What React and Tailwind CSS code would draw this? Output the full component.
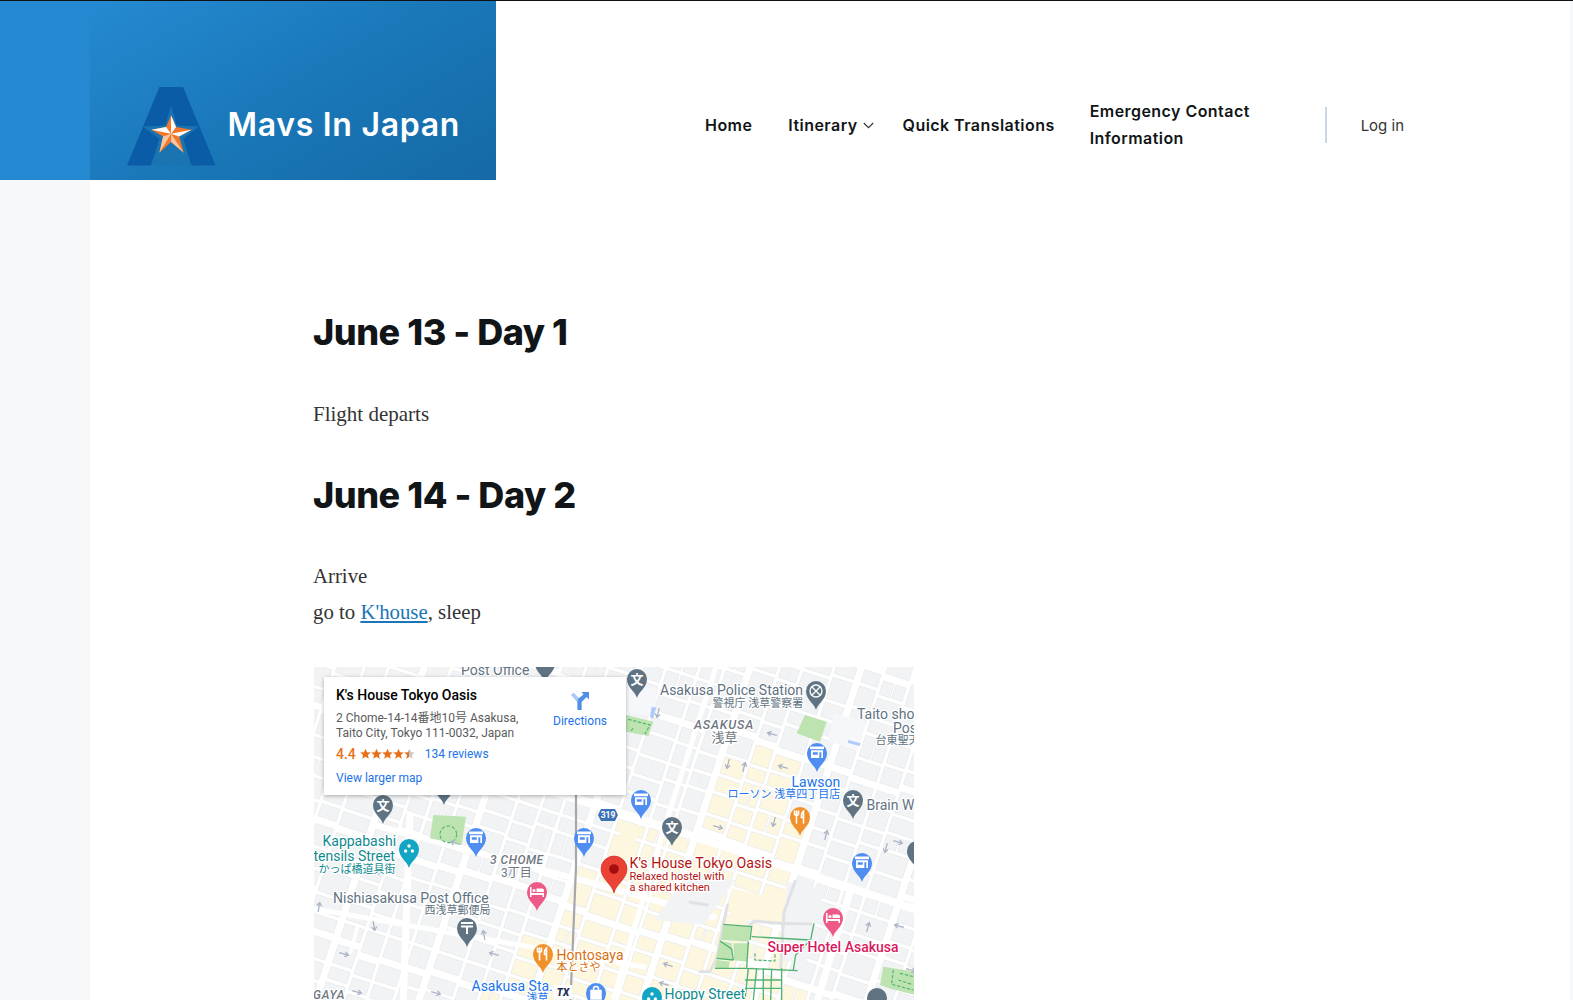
import React from "react";

const GREY = "#5f7382";
const halo = { paintOrder: "stroke", stroke: "#ffffff", strokeWidth: 2.5, strokeLinejoin: "round" };

function rnd(i, j) {
  const s = Math.sin(i * 12.9898 + j * 78.233) * 43758.5453;
  return s - Math.floor(s);
}

function inPoly(x, y, poly) {
  let inside = false;
  for (let i = 0, j = poly.length - 1; i < poly.length; j = i++) {
    const [xi, yi] = poly[i];
    const [xj, yj] = poly[j];
    if (yi > y !== yj > y && x < ((xj - xi) * (y - yi)) / (yj - yi) + xi) inside = !inside;
  }
  return inside;
}

const CREAM = [[413, 80], [473, 90], [480, 165], [470, 260], [500, 340], [165, 340], [205, 300], [235, 240], [285, 190], [300, 150], [400, 160]];
const ANGLE = (18 * Math.PI) / 180;

function buildBlocks() {
  const out = [];
  const widths = [22, 18, 26, 20, 17, 24, 19, 28, 20, 18];
  const heights = [14, 19, 12, 22, 15, 13, 20, 17];
  let u = -160;
  let c = 0;
  while (u < 780) {
    const w = widths[c % widths.length];
    let v = -170;
    let r = 0;
    const gapU = c % 4 === 3 ? 8 : 4;
    while (v < 640) {
      const h = heights[(r + c * 3) % heights.length];
      const gapV = r % 5 === 4 ? 8 : 4;
      const split = rnd(c, r) > 0.8;
      const cu = u + w / 2 - 300;
      const cv = v + h / 2 - 225;
      const mx = 300 + cu * Math.cos(ANGLE) - cv * Math.sin(ANGLE);
      const my = 225 + cu * Math.sin(ANGLE) + cv * Math.cos(ANGLE);
      const fill = inPoly(mx, my, CREAM) ? "#fef7e0" : "#f1f3f4";
      if (split) {
        out.push(<rect key={`${c}-${r}a`} x={u} y={v} width={w * 0.46} height={h} fill={fill} stroke="#e4e6e9" strokeWidth="0.6" />);
        out.push(<rect key={`${c}-${r}b`} x={u + w * 0.54} y={v} width={w * 0.46} height={h} fill={fill} stroke="#e4e6e9" strokeWidth="0.6" />);
      } else {
        out.push(<rect key={`${c}-${r}`} x={u} y={v} width={w} height={h} fill={fill} stroke="#e4e6e9" strokeWidth="0.6" />);
      }
      v += h + gapV;
      r += 1;
    }
    u += w + gapU;
    c += 1;
  }
  return out;
}

const PIN = "M0 0 C-2 -7 -10 -10 -10 -19 A10 10 0 1 1 10 -19 C10 -10 2 -7 0 0Z";

function Pin({ x, y, color, children }) {
  return (
    <g transform={`translate(${x} ${y})`}>
      <path d={PIN} fill={color} />
      <g transform="translate(0 -19)">{children}</g>
    </g>
  );
}

const Bun = () => (
  <text y="4.5" textAnchor="middle" fontSize="13" fontWeight="700" fill="#fff" fontFamily="'Noto Sans CJK JP', sans-serif">文</text>
);
const Shop = () => (
  <g fill="#fff">
    <path d="M-7 -6.5H7V-3.8H-7Z" />
    <path fillRule="evenodd" d="M-6 -2.8H6V5H-6ZM-4.2 -0.8V1.8H0.8V-0.8ZM2.4 -0.8V5H4.3V-0.8Z" />
  </g>
);
const Bed = () => (
  <g fill="#fff">
    <path d="M-7 -5H-5.5V1H7V5H5.5V3H-5.5V5H-7Z" />
    <circle cx="-3" cy="-1.5" r="1.6" />
    <path d="M-0.5 -3.5H5a2 2 0 0 1 2 2V0H-0.5Z" />
  </g>
);
const Fork = () => (
  <g fill="none" stroke="#fff" strokeWidth="1.6" strokeLinecap="round">
    <path d="M-3.5 -6V6M-5.5 -6V-2.5Q-3.5 -0.5 -1.5 -2.5V-6" />
    <path d="M3.5 6V-6Q1 -4 1.5 0.5H3.5" />
  </g>
);
const Post = () => (
  <g fill="#fff">
    <path d="M-6 -6H6V-4H-6Z" />
    <path d="M-6 -2.5H6V-0.5H1V6H-1V-0.5H-6Z" />
  </g>
);
const Dots = () => (
  <g fill="#fff">
    <circle cx="0" cy="-3" r="1.7" />
    <circle cx="-3.4" cy="2" r="1.7" />
    <circle cx="3.4" cy="2" r="1.7" />
  </g>
);
const Bag = () => (
  <g fill="none" stroke="#fff" strokeWidth="1.5">
    <path d="M-5 -2.5H5V6H-5Z" fill="#fff" />
    <path d="M-2.5 -2.5V-4a2.5 2.5 0 0 1 5 0V-2.5" />
  </g>
);
const Police = () => (
  <g fill="none" stroke="#fff" strokeWidth="1.3">
    <circle r="6" />
    <path d="M-4 -4L4 4M4 -4L-4 4" />
  </g>
);

function Arrow({ x, y, a }) {
  return (
    <g transform={`translate(${x} ${y}) rotate(${a})`} fill="none" stroke="#aab4c6" strokeWidth="1.3">
      <path d="M-5 0H4M1 -2.5L4.5 0L1 2.5" />
    </g>
  );
}

function Label({ x, y, size = 14, fill = GREY, weight = 400, italic, ls, children }) {
  return (
    <text
      x={x - 314}
      y={y - 667}
      fontSize={size}
      fill={fill}
      fontWeight={weight}
      fontStyle={italic ? "italic" : "normal"}
      letterSpacing={ls}
      fontFamily="Roboto, 'Noto Sans CJK JP', sans-serif"
      style={halo}
    >
      {children}
    </text>
  );
}

function MapDrawing() {
  return (
    <svg viewBox="0 0 600 450" width="600" height="450" className="block">
      <rect width="600" height="450" fill="#ffffff" />
      <g transform="rotate(18 300 225)">{buildBlocks()}</g>

      {/* major streets */}
      <g stroke="#ffffff" fill="none" strokeLinecap="round">
        <path d="M230 122L366 165L610 245" strokeWidth="8" />
        <path d="M60 158L109 171L300 222L400 250" strokeWidth="6" />
        <path d="M96 150L89 340" strokeWidth="7" />
        <path d="M536 225L500 345" strokeWidth="7" />
        <path d="M405 -10L349 165L300 330" strokeWidth="5" />
        <path d="M-10 240L330 300" strokeWidth="5" />
      </g>

      {/* big cream and grey areas */}
      <g transform="translate(306 158) scale(0.3333)">
        <path d="M105 285L200 150L345 165L250 300Z" fill="#f1f3f4" />
        <path d="M500 170L612 192L560 410L490 410Z" fill="#f1f3f4" />
        <path d="M335 190L450 215L500 190L490 300L395 285L330 290Z" fill="#fef7e0" />
        <path d="M0 0L60 0L30 100L0 130Z" fill="#fef7e0" />
        <g fill="none" stroke="#dfe1e5" strokeWidth="9" strokeLinejoin="round" strokeLinecap="round">
          <path d="M210 232L262 240M322 240L312 290L290 400L270 440L240 440" />
          <path d="M390 300L402 288L482 295L572 297" />
          <path d="M525 170L492 262L482 430" />
        </g>
        <g fill="#bce3b0">
          <path d="M310 300L392 306L386 350L304 344Z" />
          <path d="M300 347L335 355L336 404L290 400Z" />
          <path d="M340 355L385 355L380 410L342 406Z" />
          <path d="M290 405L330 410L325 432L284 430Z" />
          <path d="M790 425L885 440L885 510L815 492L780 480Z" />
        </g>
        <g fill="none" stroke="#52b274" strokeWidth="4">
          <path d="M310 298L395 305L390 345" />
          <path d="M395 335L570 345" />
          <path d="M582 295L572 345L527 390L520 435" />
          <path d="M385 350L380 430L533 437" />
          <path d="M385 430L375 525M430 430L430 525M485 430L485 525M455 432L452 525M410 430L400 525" />
          <path d="M375 465L485 465M375 490L485 490" />
          <path d="M300 348L335 372L340 405M285 430L380 430M290 400L340 405" />
        </g>
        <g fill="none" stroke="#52b274" strokeWidth="3.5" strokeDasharray="10 5">
          <path d="M405 385L405 405L465 408L465 385" />
          <path d="M820 435L815 478L880 495M840 445L880 455M835 465L875 478" />
        </g>
      </g>

      {/* features of the top right zone */}
      <g transform="translate(306 -7) scale(0.3333)">
        <path d="M530 220L555 165L620 185L600 245Z" fill="#bce3b0" />
        <path d="M642 160L737 187L712 272L622 242Z" fill="#f5f7fb" />
        <path d="M685 240L722 250L719 258L683 248Z" fill="#aecbfa" />
        <path d="M18 60L115 90L98 170L18 155Z" fill="#f5f7fb" />
        <path d="M95 140L109 143L99 176L90 172Z" fill="#aecbfa" />
        <path d="M18 165L100 185L85 228L18 215Z" fill="#bce3b0" />
        <path d="M25 178L90 195L75 222M40 205L30 215" fill="none" stroke="#52b274" strokeWidth="3.5" strokeDasharray="10 5" />
      </g>

      {/* features of the lower left zone */}
      <g transform="translate(-4 158) scale(0.3333)">
        <path d="M370 -30L468 -25L455 60L360 40Z" fill="#bce3b0" />
        <circle cx="415" cy="28" r="25" fill="none" stroke="#52b274" strokeWidth="3.5" strokeDasharray="10 6" />
        <path d="M143 305L122 382" fill="none" stroke="#ffffff" strokeWidth="10" strokeLinecap="round" />
      </g>

      {/* railway */}
      <path d="M262 125L262 200L256 345" fill="none" stroke="#a4a8ad" strokeWidth="2.2" />

      {/* arrows */}
      <Arrow x={141} y={176} a={195} />
      <Arrow x={197} y={204} a={-72} />
      <Arrow x={63} y={205} a={0} />
      <Arrow x={5} y={240} a={-80} />
      <Arrow x={60} y={259} a={80} />
      <Arrow x={170} y={268} a={-100} />
      <Arrow x={180} y={287} a={195} />
      <Arrow x={30} y={287} a={15} />
      <Arrow x={43} y={325} a={15} />
      <Arrow x={122} y={326} a={15} />
      <Arrow x={354} y={298} a={200} />
      <Arrow x={350} y={317} a={195} />
      <Arrow x={344} y={46} a={105} />
      <Arrow x={458} y={67} a={195} />
      <Arrow x={414} y={97} a={105} />
      <Arrow x={430} y={100} a={-75} />
      <Arrow x={469} y={100} a={195} />
      <Arrow x={460} y={155} a={105} />
      <Arrow x={404} y={160} a={15} />
      <Arrow x={512} y={168} a={-75} />
      <Arrow x={584} y={175} a={15} />
      <Arrow x={572} y={181} a={105} />
      <Arrow x={554} y={260} a={-75} />
      <Arrow x={585} y={259} a={195} />
      <Arrow x={597} y={303} a={15} />

      {/* pins */}
      <Pin x={231} y={15} color="#5f7382" />
      <Pin x={130} y={138} color="#5f7382" />
      <Pin x={323} y={31} color="#5f7382"><Bun /></Pin>
      <Pin x={502} y={43} color="#5f7382"><Police /></Pin>
      <Pin x={503} y={105} color="#4f8df0"><Shop /></Pin>
      <Pin x={327} y={152} color="#4f8df0"><Shop /></Pin>
      <Pin x={358} y={179} color="#5f7382"><Bun /></Pin>
      <Pin x={486} y={169} color="#f1912b"><Fork /></Pin>
      <Pin x={539} y={152} color="#5f7382"><Bun /></Pin>
      <Pin x={548} y={215} color="#4f8df0"><Shop /></Pin>
      <Pin x={519} y={270} color="#ee5a87"><Bed /></Pin>
      <Pin x={338} y={349} color="#12a5c4"><Dots /></Pin>
      <Pin x={563} y={350} color="#5f7382" />
      <Pin x={603} y={203} color="#5f7382" />
      <Pin x={95} y={201} color="#12a5c4"><Dots /></Pin>
      <Pin x={162} y={190} color="#4f8df0"><Shop /></Pin>
      <Pin x={270} y={190} color="#4f8df0"><Shop /></Pin>
      <Pin x={223} y={244} color="#ee5a87"><Bed /></Pin>
      <Pin x={153} y={280} color="#5f7382"><Post /></Pin>
      <Pin x={229} y={306} color="#f1912b"><Fork /></Pin>
      <Pin x={282} y={345} color="#4f8df0"><Bag /></Pin>
      <Pin x={69} y={157} color="#5f7382"><Bun /></Pin>

      {/* main marker */}
      <g transform="translate(300 226)">
        <path d="M0 0C-2 -9 -13 -14 -13 -24A13 13 0 1 1 13 -24C13 -14 2 -9 0 0Z" fill="#ea4335" stroke="#c5221f" strokeWidth="0.6" />
        <circle cy="-24" r="4.8" fill="#a50e0e" />
      </g>

      {/* road badge */}
      <g transform="translate(294 148)">
        <path d="M-10 0L-7 -6H7L10 0L7 6H-7Z" fill="#3d72b8" />
        <text y="3" textAnchor="middle" fontSize="8.5" fontWeight="700" fill="#fff" fontFamily="Roboto, sans-serif">319</text>
      </g>

      {/* TX sign */}
      <g transform="translate(249 325)">
        <rect x="-9" y="-7" width="18" height="14" fill="#ffffff" />
        <text y="3.5" textAnchor="middle" fontSize="10" fontStyle="italic" fontWeight="900" fill="#1e3150" fontFamily="Roboto, sans-serif">TX</text>
      </g>

      {/* labels */}
      <Label x={461} y={675}>Post Office</Label>
      <Label x={660} y={695}>Asakusa Police Station</Label>
      <Label x={712.5} y={706.5} size={11}>警視庁 浅草警察署</Label>
      <Label x={694} y={729} size={12.5} italic weight={500} ls={0.8} fill="#6f7780">ASAKUSA</Label>
      <Label x={711.5} y={742} size={13} fill="#6f7780">浅草</Label>
      <Label x={857} y={719}>Taito sho</Label>
      <Label x={893} y={733}>Pos</Label>
      <Label x={875.5} y={744} size={11}>台東聖天</Label>
      <Label x={791.5} y={786.5} fill="#1a73e8">Lawson</Label>
      <Label x={727.5} y={798} size={11} fill="#1a73e8">ローソン 浅草四丁目店</Label>
      <Label x={866.5} y={810}>Brain W</Label>
      <Label x={322.5} y={845.5} fill="#0f8a90">Kappabashi</Label>
      <Label x={313.5} y={860.5} fill="#0f8a90">tensils Street</Label>
      <Label x={318.5} y={872.5} size={11} fill="#0f8a90">かっぱ橋道具街</Label>
      <Label x={490} y={864} size={12} italic weight={500} ls={0.5} fill="#6f7780">3 CHOME</Label>
      <Label x={501} y={876.5} size={12} fill="#6f7780">3丁目</Label>
      <Label x={333} y={902.5}>Nishiasakusa Post Office</Label>
      <Label x={424.5} y={913.5} size={11}>西浅草郵便局</Label>
      <Label x={556.5} y={959.5} fill="#d5700f">Hontosaya</Label>
      <Label x={556.5} y={970.5} size={11} fill="#d5700f">本とさや</Label>
      <Label x={471.5} y={990.5} fill="#1a73e8">Asakusa Sta.</Label>
      <Label x={526.5} y={1002} size={11} fill="#1a73e8">浅草</Label>
      <Label x={313} y={999} size={12} italic weight={500} ls={0.8} fill="#6f7780">GAYA</Label>
      <Label x={629.5} y={867.5} size={14.2} fill="#b31412">K's House Tokyo Oasis</Label>
      <Label x={629.5} y={879.5} size={11} fill="#b31412">Relaxed hostel with</Label>
      <Label x={629.5} y={890.5} size={11} fill="#b31412">a shared kitchen</Label>
      <Label x={767.5} y={951.5} weight={500} fill="#d81b60">Super Hotel Asakusa</Label>
      <Label x={664.5} y={998.5} fill="#0f8a90">Hoppy Street</Label>
    </svg>
  );
}

function Stars() {
  return (
    <svg width="56" height="12" viewBox="0 0 56 12" className="block">
      <defs>
        <linearGradient id="half">
          <stop offset="50%" stopColor="#e7711b" />
          <stop offset="50%" stopColor="#c8c8c8" />
        </linearGradient>
      </defs>
      {[0, 1, 2, 3, 4].map((i) => (
        <path
          key={i}
          transform={`translate(${i * 11} 0)`}
          d="M5.5 .8L7 4.3L10.8 4.6L7.9 7.1L8.8 10.8L5.5 8.8L2.2 10.8L3.1 7.1L.2 4.6L4 4.3Z"
          fill={i === 4 ? "url(#half)" : "#e7711b"}
        />
      ))}
    </svg>
  );
}

function DirectionsIcon() {
  return (
    <svg width="20" height="19" viewBox="0 0 20 19" className="block">
      <path d="M1 4L3.5 1.5L11.5 9.5V19H7.5V11.2Z" fill="#a8c9f5" />
      <path d="M7.5 19V10.5Q7.5 8.5 9 7L13.5 3.5L11.5 1H19V8.5L16.7 6L11.5 11V19Z" fill="#4f8fe6" />
    </svg>
  );
}

function InfoCard() {
  return (
    <div className="absolute left-[10px] top-[10px] flex h-[118px] w-[302px] bg-white pl-3 pt-[8px] text-[12px] shadow-[0_1px_4px_rgba(0,0,0,0.3)] [font-family:Roboto,'Noto_Sans_CJK_JP',sans-serif]">
      <div className="w-[214px]">
        <div className="text-[14px] font-medium leading-[20px] text-black">K's House Tokyo Oasis</div>
        <div className="mt-[6px] leading-[15px] text-[#5b5b5b]">2 Chome-14-14番地10号 Asakusa,<br />Taito City, Tokyo 111-0032, Japan</div>
        <div className="mt-[4px] flex h-[18px] items-center">
          <span className="text-[14px] font-medium text-[#e7711b]">4.4</span>
          <span className="ml-[4px]"><Stars /></span>
          <span className="ml-[9px] text-[#1a73e8]">134 reviews</span>
        </div>
        <div className="mt-[8px] leading-[15px] text-[#1a73e8]">View larger map</div>
      </div>
      <div className="flex w-[60px] flex-col items-center pt-[6px]">
        <DirectionsIcon />
        <div className="mt-[4px] leading-[15px] text-[#1a73e8]">Directions</div>
      </div>
    </div>
  );
}

function Logo() {
  return (
    <svg width="88.5" height="78.5" viewBox="50 50 265 235" className="block shrink-0">
      <path d="M147 50H218L315 285H243L214 215H150L122 285H50Z" fill="#0a5ca6" />
      <path d="M182 105L199 165L265 168L218 205L243 285H122L147 205L97 168L165 165Z" fill="#1a74b2" />
      <path d="M182 135L197 170L243 178L206 198L220 247L182 215L147 247L158 198L123 178L167 170Z" fill="#f0782a" />
      <g fill="#ffffff">
        <path d="M182 135L197 170L182 190Z" />
        <path d="M243 178L206 198L182 190Z" />
        <path d="M123 178L167 170L182 190Z" />
      </g>
      <g fill="#f9c4a0">
        <path d="M220 247L182 215L182 190Z" />
        <path d="M147 247L158 198L182 190Z" />
      </g>
    </svg>
  );
}

function NavLink({ children, className = "" }) {
  return <a className={`block text-[16px] font-semibold leading-[27px] tracking-[0.45px] text-[#111517] ${className}`}>{children}</a>;
}

export default function App() {
  return (
    <div className="min-h-screen border-t border-[#111111] bg-white [font-family:Inter,sans-serif]">
      <header className="flex h-[179px]">
        <div className="w-[90px] bg-[#2489d1]" />
        <div className="flex w-[406px] items-start bg-[linear-gradient(150deg,#258ad2_0%,#1a78b9_50%,#1569a6_100%)] pl-[37px] pt-[86px]">
          <Logo />
          <span className="ml-[12px] mt-[15px] whitespace-nowrap text-[32px] font-semibold leading-[46px] tracking-[0.7px] text-white">Mavs In Japan</span>
        </div>
        <nav className="ml-[209px] flex items-center pt-[69px]">
          <NavLink>Home</NavLink>
          <div className="ml-[36px] flex items-center">
            <NavLink>Itinerary</NavLink>
            <svg width="11" height="7" viewBox="0 0 11 7" className="ml-[5px]">
              <path d="M.8 1L5.5 5.7L10.2 1" fill="none" stroke="#333" strokeWidth="1.1" />
            </svg>
          </div>
          <NavLink className="ml-[29px]">Quick Translations</NavLink>
          <NavLink className="ml-[35px] w-[180px]">Emergency Contact Information</NavLink>
          <div className="ml-[55px] flex h-[36px] items-center border-l-2 border-[#cbd7e3] pl-[34px] pt-[2px] text-[15px] text-[#333]">Log in</div>
        </nav>
        <div className="ml-auto w-[3px] bg-[#f6f7f9]" />
      </header>
      <div className="flex">
        <div className="w-[90px] shrink-0 bg-[#f7f8fa]" />
        <main className="pl-[223px] pt-[130px]">
          <h2 className="text-[36px] font-extrabold leading-[44px] tracking-[-0.45px] text-[#111517]">June 13 - Day 1</h2>
          <p className="mt-[42px] text-[21px] leading-[36px] text-[#333] [font-family:'Liberation_Serif',serif]">Flight departs</p>
          <h2 className="mt-[41px] text-[36px] font-extrabold leading-[44px] tracking-[-0.45px] text-[#111517]">June 14 - Day 2</h2>
          <div className="mt-[41px] text-[20.8px] leading-[36px] text-[#333] [font-family:'Liberation_Serif',serif]">
            <p>Arrive</p>
            <p>go to <a className="text-[#1a76b8] underline">K'house</a>, sleep</p>
          </div>
          <div className="relative ml-[1px] mt-[37px] h-[450px] w-[600px] overflow-hidden">
            <MapDrawing />
            <InfoCard />
          </div>
          <div className="h-[60px]" />
        </main>
        <div className="ml-auto w-[3px] shrink-0 bg-[#f6f7f9]" />
      </div>
    </div>
  );
}
